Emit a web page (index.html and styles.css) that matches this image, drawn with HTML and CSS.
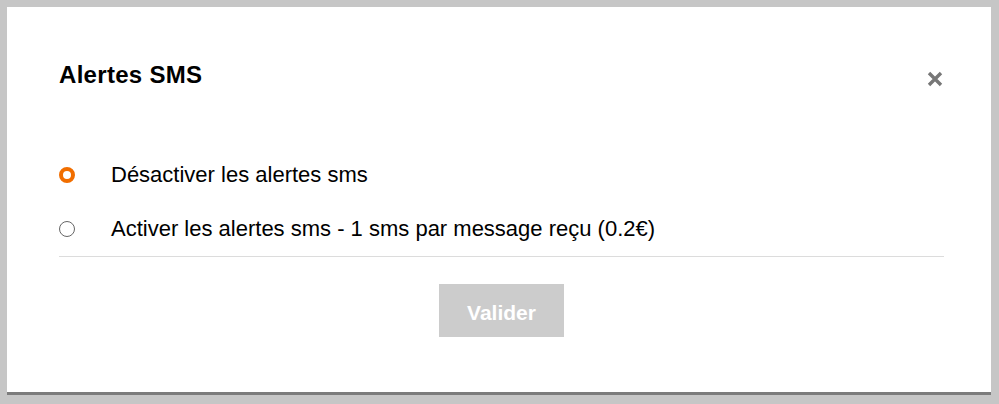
FILE: index.html
```html
<!DOCTYPE html>
<html lang="fr">
<head>
<meta charset="utf-8">
<title>Alertes SMS</title>
<link rel="stylesheet" href="styles.css">
</head>
<body>
<div class="modal">
  <div class="header">
    <h2 class="title">Alertes SMS</h2>
    <button class="close" aria-label="Fermer">
      <svg width="16" height="16" viewBox="0 0 16 16"><path d="M2 2 L14 14 M14 2 L2 14" stroke="#777" stroke-width="3.4" stroke-linecap="butt"/></svg>
    </button>
  </div>
  <div class="options">
    <label class="option">
      <span class="radio checked"></span>
      <span class="label">Désactiver les alertes sms</span>
    </label>
    <label class="option">
      <span class="radio"></span>
      <span class="label">Activer les alertes sms - 1 sms par message reçu (0.2€)</span>
    </label>
  </div>
  <div class="footer">
    <button class="submit">Valider</button>
  </div>
</div>
</body>
</html>
```

FILE: styles.css
```css
html, body {
  margin: 0;
  padding: 0;
}
body {
  background: #c6c6c6;
  padding: 7px 8px 0 7px;
  font-family: "Liberation Sans", Arial, sans-serif;
  color: #000;
  overflow: hidden;
}
.modal {
  background: #fff;
  width: 984px;
  height: 388px;
  box-sizing: border-box;
  padding: 53px 47px 0 52px;
  border-bottom: 3px solid #7c7c7c;
}
.header {
  display: flex;
  justify-content: space-between;
  align-items: center;
  height: 30px;
}
.title {
  margin: 0;
  font-size: 24px;
  line-height: 30px;
  font-weight: bold;
  letter-spacing: 0.3px;
}
.close {
  border: 0;
  background: none;
  padding: 0;
  margin: 7px 1px 0 0;
  width: 16px;
  height: 16px;
  display: flex;
}
.options {
  margin-top: 58px;
  border-bottom: 1px solid #dcdcdc;
}
.option {
  display: flex;
  align-items: center;
  height: 54px;
}
.radio {
  width: 16px;
  height: 16px;
  box-sizing: border-box;
  border-radius: 50%;
  border: 1.5px solid #666;
  margin-right: 36px;
  flex: none;
}
.radio.checked {
  border: 4px solid #f16e00;
}
.label {
  font-size: 22px;
  line-height: 26px;
}
.footer {
  display: flex;
  justify-content: center;
  margin-top: 27px;
}
.submit {
  width: 125px;
  height: 53px;
  border: 0;
  background: #cccccc;
  color: #fff;
  font-family: "Liberation Sans", Arial, sans-serif;
  font-weight: bold;
  font-size: 21px;
  padding: 4px 0 0;
}
```
